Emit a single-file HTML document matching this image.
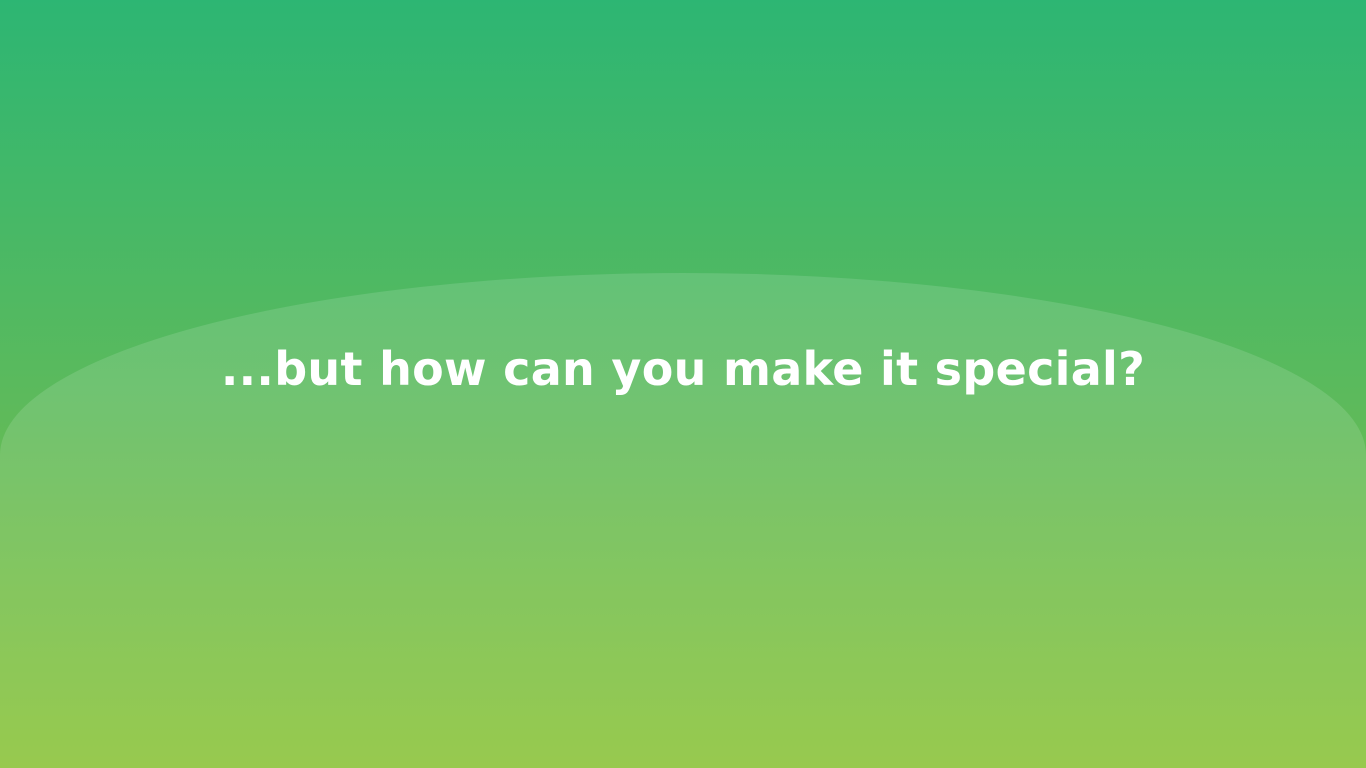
<!DOCTYPE html>
<html><head><meta charset="utf-8"><style>
html,body{margin:0;padding:0;width:1366px;height:768px;overflow:hidden}
body{position:relative;background:linear-gradient(180deg,#2db673 0%,#5cba5c 52%,#89c234 100%)}
svg{position:absolute;left:0;top:0}
.t{position:absolute;left:0;width:1366px;top:337px;text-align:center;color:#fff;font:bold 46px "DejaVu Sans",sans-serif;letter-spacing:0.3px;line-height:64px}
</style></head><body>
<svg width="1366" height="768" viewBox="0 0 1366 768"><path d="M0,768 L0,455 A683,182 0 0 1 1366,455 L1366,768 Z" fill="rgba(255,255,255,0.13)"/></svg>
<div class="t">...but how can you make it special?</div>
</body></html>
